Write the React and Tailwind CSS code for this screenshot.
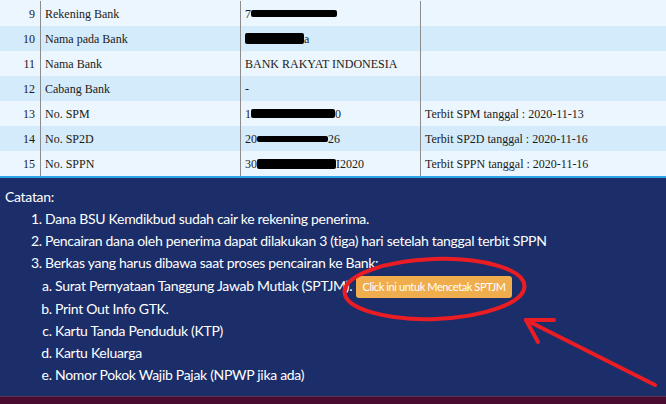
const rows = [
  { no: 9, label: "Rekening Bank", pre: "7", bar: { w: 86, h: 7 }, post: "", note: "" },
  { no: 10, label: "Nama pada Bank", pre: "", bar: { w: 59, h: 11 }, post: "a", note: "" },
  { no: 11, label: "Nama Bank", pre: "BANK RAKYAT INDONESIA", note: "" },
  { no: 12, label: "Cabang Bank", pre: "-", note: "" },
  { no: 13, label: "No. SPM", pre: "1", bar: { w: 84, h: 9 }, post: "0", note: "Terbit SPM tanggal : 2020-11-13" },
  { no: 14, label: "No. SP2D", pre: "20", bar: { w: 71, h: 6 }, post: "26", note: "Terbit SP2D tanggal : 2020-11-16" },
  { no: 15, label: "No. SPPN", pre: "30", bar: { w: 79, h: 10 }, post: "I2020", note: "Terbit SPPN tanggal : 2020-11-16" },
];

function DataRow({ row, index }) {
  const bg = index % 2 === 0 ? "bg-[#ebf6fe]" : "bg-[#d4ebfb]";
  return (
    <div className={`grid grid-cols-[41px_200px_180px_1fr] h-[25px] items-center ${bg}`}>
      <div className="h-full flex items-center justify-end pr-[5px] border-r border-[#8c8c8c]">{row.no}</div>
      <div className="h-full flex items-center pl-[4px] border-r border-[#8c8c8c]">{row.label}</div>
      <div className="h-full flex items-center pl-[4px] border-r border-[#8c8c8c] whitespace-nowrap">
        {row.pre}
        {row.bar && (
          <span className="inline-block bg-black rounded-[2px]" style={{ width: row.bar.w, height: row.bar.h }} />
        )}
        {row.post}
      </div>
      <div className="h-full flex items-center pl-[4px] whitespace-nowrap">{row.note}</div>
    </div>
  );
}

function Annotation() {
  return (
    <svg className="absolute inset-0 pointer-events-none" width="666" height="404" viewBox="0 0 666 404">
      <ellipse cx="434.5" cy="289" rx="90" ry="30" fill="none" stroke="#ea1c24" strokeWidth="4" transform="rotate(-2 434.5 289)" />
      <g stroke="#ea1c24" strokeWidth="4" strokeLinecap="round" fill="none">
        <line x1="655" y1="385" x2="526" y2="320" />
        <line x1="526" y1="320" x2="554" y2="320" />
        <line x1="526" y1="320" x2="538" y2="342" />
      </g>
    </svg>
  );
}

export default function App() {
  return (
    <div className="relative w-[666px] h-[404px] overflow-hidden bg-[#4a0b30]">
      <div className="pt-[1px] bg-[#ebf6fe] text-[12px] text-[#1d1a16]" style={{ fontFamily: '"Liberation Serif", "Times New Roman", serif' }}>
        {rows.map((row, i) => (
          <DataRow key={row.no} row={row} index={i} />
        ))}
      </div>
      <div className="h-[2px] bg-[#2aa5e6]" />
      <div
        className="h-[219px] bg-[#1b2e69] text-white text-[14px] tracking-[-0.3px] leading-[22px] px-[5px] pt-[8px] border-b border-[#5c3554]"
        style={{ fontFamily: 'Lato, "Open Sans", sans-serif' }}
      >
        <div>Catatan:</div>
        <ol className="list-decimal pl-[40px]">
          <li>Dana BSU Kemdikbud sudah cair ke rekening penerima.</li>
          <li>Pencairan dana oleh penerima dapat dilakukan 3 (tiga) hari setelah tanggal terbit SPPN</li>
          <li>
            Berkas yang harus dibawa saat proses pencairan ke Bank:
            <ol className="list-[lower-alpha] pl-[10px]">
              <li className="leading-[24px]">
                Surat Pernyataan Tanggung Jawab Mutlak (SPTJM).{" "}
                <button className="ml-[1px] px-[6px] h-[22px] rounded-[3px] bg-[#f0ad4e] text-white text-[11px] tracking-[-0.4px] leading-[22px] align-middle">
                  Click ini untuk Mencetak SPTJM
                </button>
              </li>
              <li>Print Out Info GTK.</li>
              <li>Kartu Tanda Penduduk (KTP)</li>
              <li>Kartu Keluarga</li>
              <li>Nomor Pokok Wajib Pajak (NPWP jika ada)</li>
            </ol>
          </li>
        </ol>
      </div>
      <Annotation />
    </div>
  );
}
